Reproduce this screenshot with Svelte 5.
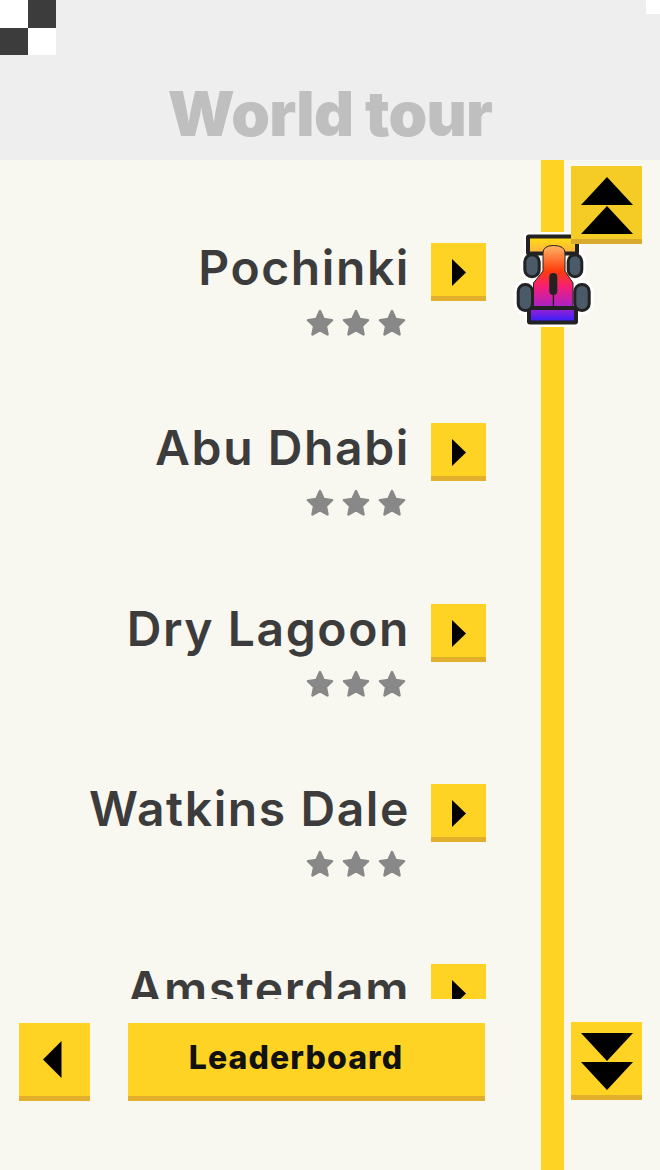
<script>
  const tracks = ['Pochinki', 'Abu Dhabi', 'Dry Lagoon', 'Watkins Dale', 'Amsterdam'];
  const star = 'M12 2.500l2.900 6.300 6.700 0.900-4.900 4.700 1.300 6.700L12 17.800l-6 3.300 1.300-6.700-4.900-4.700 6.700-0.900z';
</script>

<div class="page">
  <header class="header">
    <div class="checker"><i class="w"></i><i class="d"></i><i class="d"></i><i class="w"></i></div>
    <div class="corner"></div>
    <h1>World tour</h1>
  </header>

  <main class="main">
    <div class="road"></div>

    <div class="list">
      {#each tracks as t}
        <div class="row">
          <div class="info">
            <div class="name">{t}</div>
            <div class="stars">
              {#each [0, 1, 2] as s}
                <svg width="30" height="30" viewBox="0 0 24 24"><path d={star} fill="#888" stroke="#888" stroke-width="2" stroke-linejoin="round" /></svg>
              {/each}
            </div>
          </div>
          <button class="btn go" aria-label="Play {t}">
            <svg width="14" height="27" viewBox="0 0 14 27"><path d="M0 0 L14 13.500 L0 27z" fill="#000" /></svg>
          </button>
        </div>
      {/each}
    </div>

    <button class="btn up" aria-label="Up">
      <svg width="52" height="57" viewBox="0 0 52 57"><path d="M26 0 L52 28 H0z M26 29 L52 57 H0z" fill="#000" /></svg>
    </button>

    <svg class="car" width="90" height="110" viewBox="0 0 90 110">
      <defs>
        <linearGradient id="body" gradientUnits="userSpaceOnUse" x1="0" y1="20" x2="0" y2="82">
          <stop offset="0" stop-color="#ffb868" />
          <stop offset="0.42" stop-color="#ff3c0c" />
          <stop offset="0.68" stop-color="#f41e78" />
          <stop offset="1" stop-color="#a822c8" />
        </linearGradient>
        <linearGradient id="wing" x1="0" y1="0" x2="0" y2="1">
          <stop offset="0" stop-color="#ffe010" />
          <stop offset="1" stop-color="#ffb040" />
        </linearGradient>
        <linearGradient id="rear" x1="0" y1="0" x2="0" y2="1">
          <stop offset="0" stop-color="#a020d0" />
          <stop offset="1" stop-color="#2c20ff" />
        </linearGradient>
      </defs>
      <g fill="#fff" stroke="#fff" stroke-width="9" stroke-linejoin="round">
        <rect x="18" y="11.500" width="49" height="17" rx="1" />
        <rect x="14.800" y="29.800" width="14.400" height="22" rx="7" />
        <rect x="58.200" y="29.800" width="13.600" height="22" rx="6.800" />
        <rect x="8.200" y="59.500" width="14.300" height="26" rx="7" />
        <rect x="64.800" y="59.500" width="14.400" height="26" rx="7" />
        <rect x="19" y="83" width="47" height="14.500" rx="1" />
      </g>
      <rect x="18" y="11.500" width="49" height="17" rx="1" fill="url(#wing)" stroke="#222" stroke-width="4" />
      <path d="M33 28 Q33 20.500 43.500 20.500 Q55 20.500 55 28 V46 L63 58 V83 H23.500 V58 L33 46z" fill="url(#body)" stroke="#222" stroke-width="1" />
      <rect x="19" y="83" width="47" height="14.500" rx="1" fill="url(#rear)" stroke="#222" stroke-width="4" />
      <g fill="#4a5a68" stroke="#222" stroke-width="3">
        <rect x="14.800" y="29.800" width="14.400" height="22" rx="7" />
        <rect x="58.200" y="29.800" width="13.600" height="22" rx="6.800" />
        <rect x="8.200" y="59.500" width="14.300" height="26" rx="7" />
        <rect x="64.800" y="59.500" width="14.400" height="26" rx="7" />
      </g>
      <rect x="39.300" y="48" width="8" height="22" rx="4" fill="#222" />
      <rect x="42.700" y="68" width="1.400" height="14" fill="#222" />
    </svg>

    <div class="footer">
      <button class="btn back" aria-label="Back">
        <svg width="19" height="37" viewBox="0 0 19 37"><path d="M18.500 0 L0 18.500 L18.500 37z" fill="#000" /></svg>
      </button>
      <button class="btn board">Leaderboard</button>
    </div>

    <button class="btn down" aria-label="Down">
      <svg width="52" height="57" viewBox="0 0 52 57"><path d="M0 0 H52 L26 28z M0 29 H52 L26 57z" fill="#000" /></svg>
    </button>
  </main>
</div>

<style>
  :global(body) { margin: 0; background: #f8f7f0; }
  .page { width: 660px; height: 1170px; overflow: hidden; font-family: "Inter", "Liberation Sans", sans-serif; }
  .header { position: relative; height: 160px; background: #eeeeee; display: flex; justify-content: center; }
  .checker { position: absolute; left: 0; top: 0; display: grid; grid-template-columns: 28px 28px; grid-auto-rows: 27.500px; }
  .w { background: #fff; }
  .d { background: #3c3c3c; }
  .corner { position: absolute; right: 0; top: 0; width: 14px; height: 14px; background: #fff; }
  h1 { margin: 84px 0 0; font-size: 62px; line-height: 60px; font-weight: 900; color: #bfbfbf; letter-spacing: -0.700px; }
  .main { position: relative; height: 1010px; }
  .road { position: absolute; left: 541px; top: 0; bottom: 0; width: 23px; background: #ffd324; }
  .list { position: absolute; left: 0; top: 0; width: 486px; height: 839px; overflow: hidden; padding-top: 83px; box-sizing: border-box; display: flex; flex-direction: column; gap: 122.300px; }
  .row { display: flex; justify-content: flex-end; gap: 22px; height: 58px; flex: none; }
  .info { display: flex; flex-direction: column; align-items: flex-end; }
  .name { font-size: 48px; line-height: 50px; font-weight: 600; color: #3c3c3c; letter-spacing: 1.600px; white-space: nowrap; margin-right: -1px; }
  .stars { display: flex; gap: 6px; margin-top: 15px; margin-right: 2px; }
  .stars svg { display: block; }
  .btn { border: 0; padding: 0; margin: 0; background: #ffd324; border-bottom: 5px solid #e2b02c; box-sizing: border-box; display: flex; align-items: center; justify-content: center; cursor: pointer; }
  .go { width: 55px; height: 58px; padding-top: 6px; }
  .up { position: absolute; left: 571px; top: 6px; width: 71px; height: 78px; background: #f5cc26; border-bottom-color: #d9aa30; z-index: 3; padding-top: 5px; }
  .down { position: absolute; left: 571px; top: 862px; width: 71px; height: 78px; padding-top: 5px; }
  .car { position: absolute; left: 510px; top: 65px; z-index: 2; }
  .footer { position: absolute; left: 19px; top: 863px; display: flex; gap: 38px; }
  .back { width: 71px; height: 78px; padding-right: 4px; }
  .board { width: 357px; height: 78px; font-family: "Inter", sans-serif; font-size: 32px; line-height: 1; font-weight: 800; letter-spacing: 1.100px; color: #111; padding: 0 21px 4px 0; }
</style>
